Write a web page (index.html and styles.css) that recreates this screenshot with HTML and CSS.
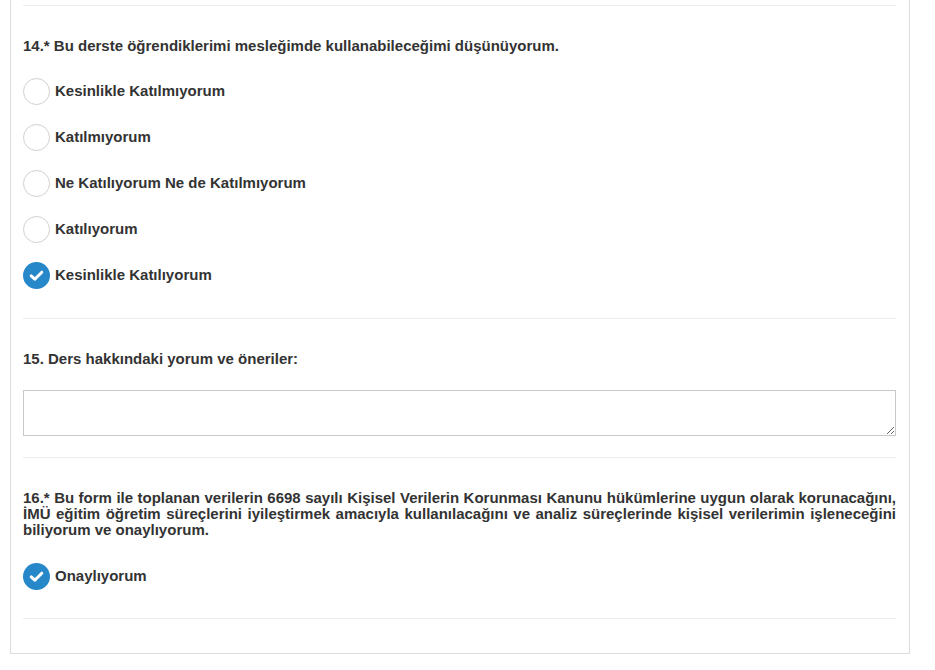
FILE: index.html
```html
<!DOCTYPE html>
<html lang="tr">
<head>
<meta charset="utf-8">
<title>Anket</title>
<link rel="stylesheet" href="styles.css">
</head>
<body>
<div class="card">
  <div class="sep"></div>

  <section class="question q14">
    <div class="title">14.* Bu derste öğrendiklerimi mesleğimde kullanabileceğimi düşünüyorum.</div>
    <div class="options">
      <label class="option"><span class="radio"></span><span class="label">Kesinlikle Katılmıyorum</span></label>
      <label class="option"><span class="radio"></span><span class="label">Katılmıyorum</span></label>
      <label class="option"><span class="radio"></span><span class="label">Ne Katılıyorum Ne de Katılmıyorum</span></label>
      <label class="option"><span class="radio"></span><span class="label">Katılıyorum</span></label>
      <label class="option"><span class="radio checked"><svg viewBox="0 0 27 27" width="27" height="27"><circle cx="13.5" cy="13.5" r="13.5" fill="#2688c9"/><polyline points="8.2,13.8 11.8,17.2 18.8,10.2" fill="none" stroke="#fff" stroke-width="3" stroke-linecap="round" stroke-linejoin="round"/></svg></span><span class="label">Kesinlikle Katılıyorum</span></label>
    </div>
  </section>

  <div class="sep"></div>

  <section class="question q15">
    <div class="title">15. Ders hakkındaki yorum ve öneriler:</div>
    <textarea class="comment"></textarea>
  </section>

  <div class="sep"></div>

  <section class="question q16">
    <div class="title justify">16.* Bu form ile toplanan verilerin 6698 sayılı Kişisel Verilerin Korunması Kanunu hükümlerine uygun olarak korunacağını, İMÜ eğitim öğretim süreçlerini iyileştirmek amacıyla kullanılacağını ve analiz süreçlerinde kişisel verilerimin işleneceğini biliyorum ve onaylıyorum.</div>
    <div class="options">
      <label class="option"><span class="radio checked"><svg viewBox="0 0 27 27" width="27" height="27"><circle cx="13.5" cy="13.5" r="13.5" fill="#2688c9"/><polyline points="8.2,13.8 11.8,17.2 18.8,10.2" fill="none" stroke="#fff" stroke-width="3" stroke-linecap="round" stroke-linejoin="round"/></svg></span><span class="label">Onaylıyorum</span></label>
    </div>
  </section>

  <div class="sep"></div>
</div>
</body>
</html>
```

FILE: styles.css
```css
* { box-sizing: border-box; }

html, body {
  margin: 0;
  padding: 0;
  background: #fff;
}

body {
  font-family: "Liberation Sans", Arial, sans-serif;
  color: #333;
  font-size: 15px;
}

.card {
  margin-left: 10px;
  width: 900px;
  border: 1px solid #ddd;
  border-top: none;
  padding: 5px 13px 34px 12px;
  background: #fff;
}

.sep {
  height: 1px;
  background: #ececec;
}

.question {
  padding-top: 32px;
}

.title {
  font-weight: bold;
  font-size: 15px;
  line-height: 16px;
}

.title.justify {
  text-align: justify;
}

.q14 { padding-bottom: 29px; }
.q15 { padding-bottom: 21px; }
.q16 { padding-bottom: 28px; }

.options {
  display: flex;
  flex-direction: column;
  gap: 18px;
  margin-top: 23px;
}

.q16 .options { margin-top: 24px; }

.option {
  display: flex;
  align-items: center;
  gap: 5px;
  height: 28px;
  font-weight: bold;
  font-size: 15px;
  cursor: pointer;
}

.label {
  padding-bottom: 2px;
}

.radio {
  width: 27px;
  height: 27px;
  border-radius: 50%;
  border: 1px solid #d3d0cb;
  background: #fff;
  flex: none;
  display: flex;
}

.radio.checked {
  border: none;
}

.radio svg {
  display: block;
}

.comment {
  display: block;
  width: 100%;
  height: 46px;
  margin-top: 23px;
  border: 1px solid #c8c8c8;
  border-radius: 0;
  resize: vertical;
  font-family: inherit;
  font-size: 14px;
  padding: 6px;
}
```
